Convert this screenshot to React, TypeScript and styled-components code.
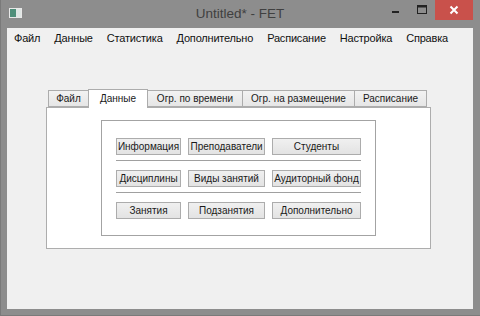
import React from 'react'
import styled, { createGlobalStyle } from 'styled-components'

const GlobalStyle = createGlobalStyle`
  html, body {
    margin: 0;
    padding: 0;
    background: #8d8d8d;
    overflow: hidden;
  }
  * {
    box-sizing: border-box;
  }
`

const Frame = styled.div`
  width: 480px;
  height: 316px;
  display: flex;
  flex-direction: column;
  padding: 0 7px 6px 6px;
  background: #8d8d8d;
  border-left: 1px solid #7a7a7a;
  border-bottom: 1px solid #7a7a7a;
  font-family: "Liberation Sans", Arial, sans-serif;
`

const TitleBar = styled.div`
  height: 28px;
  display: grid;
  grid-template-columns: 1fr auto 1fr;
  align-items: start;
`

const AppIcon = styled.div`
  margin: 8px 0 0 2px;
  width: 13px;
  height: 10px;
  border: 1px solid #e8e8e8;
  background: linear-gradient(90deg, #4f8f7a 0 55%, #dfe6e4 55%);
`

const Title = styled.div`
  padding-top: 5px;
  font-size: 13.5px;
  color: #404040;
  line-height: 18px;
`

const Controls = styled.div`
  display: flex;
  justify-content: flex-end;
  align-items: flex-start;
`

const ControlButton = styled.div<{ $close?: boolean }>`
  width: ${({ $close }) => ($close ? '38px' : '26px')};
  height: 20px;
  display: flex;
  align-items: center;
  justify-content: center;
  background: ${({ $close }) => ($close ? '#c9514b' : 'transparent')};
`

const Client = styled.div`
  flex: 1;
  background: #f0f0f0;
  display: flex;
  flex-direction: column;
`

const MenuBar = styled.div`
  display: flex;
  height: 17px;
  align-items: center;
  margin-top: 1px;
`

const MenuItem = styled.div`
  padding: 0 7px;
  font-size: 11px;
  letter-spacing: -0.2px;
  color: #111;
`

const TabWidget = styled.div`
  margin: 43px 42px 0 39px;
  display: flex;
  flex-direction: column;
`

const TabBar = styled.div`
  display: flex;
  align-items: flex-end;
  padding-left: 2px;
  height: 18px;
  position: relative;
  z-index: 1;
`

const Tab = styled.div<{ $width: number; $active?: boolean }>`
  width: ${({ $width }) => $width}px;
  height: ${({ $active }) => ($active ? '19px' : '17px')};
  margin-bottom: ${({ $active }) => ($active ? '-1px' : '0')};
  border: 1px solid #acacac;
  border-bottom: ${({ $active }) => ($active ? 'none' : '1px solid #acacac')};
  margin-left: -1px;
  background: ${({ $active }) => ($active ? '#ffffff' : 'linear-gradient(#f2f2f2, #e6e6e6)')};
  font-size: 10px;
  color: #1a1a1a;
  display: flex;
  align-items: center;
  justify-content: center;
  padding-bottom: ${({ $active }) => ($active ? '2px' : '0')};
  &:first-child {
    margin-left: 0;
  }
`

const Panel = styled.div`
  height: 142px;
  background: #ffffff;
  border: 1px solid #adadad;
  display: flex;
  justify-content: center;
  padding-top: 12px;
`

const GroupBox = styled.div`
  width: 275px;
  height: 116px;
  border: 1px solid #a3a3a3;
  padding: 17px 14px 0;
`

const ButtonRow = styled.div`
  display: grid;
  grid-template-columns: 65px 77px 89px;
  column-gap: 7px;
`

const Separator = styled.div`
  height: 2px;
  border-top: 1px solid #a0a0a0;
  border-bottom: 1px solid #ffffff;
  margin: 5px 0 8px;
`

const PushButton = styled.div`
  height: 17px;
  border: 1px solid #acacac;
  background: linear-gradient(#f0f0f0, #e3e3e3);
  font-size: 10px;
  color: #1a1a1a;
  display: flex;
  align-items: center;
  justify-content: center;
  white-space: nowrap;
`

const menu = ['Файл', 'Данные', 'Статистика', 'Дополнительно', 'Расписание', 'Настройка', 'Справка']

const tabs = [
  { label: 'Файл', width: 41 },
  { label: 'Данные', width: 60, active: true },
  { label: 'Огр. по времени', width: 96 },
  { label: 'Огр. на размещение', width: 113 },
  { label: 'Расписание', width: 73 },
]

const rows = [
  ['Информация', 'Преподаватели', 'Студенты'],
  ['Дисциплины', 'Виды занятий', 'Аудиторный фонд'],
  ['Занятия', 'Подзанятия', 'Дополнительно'],
]

const App = () => (
  <>
    <GlobalStyle />
    <Frame>
      <TitleBar>
        <AppIcon />
        <Title>Untitled* - FET</Title>
        <Controls>
          <ControlButton>
            <svg width="10" height="10" viewBox="0 0 10 10">
              <rect x="1" y="6" width="7" height="2" fill="#222" />
            </svg>
          </ControlButton>
          <ControlButton>
            <svg width="10" height="10" viewBox="0 0 10 10">
              <rect x="0.5" y="0.5" width="9" height="8" fill="none" stroke="#222" />
              <rect x="0.5" y="0.5" width="9" height="2" fill="#222" />
            </svg>
          </ControlButton>
          <ControlButton $close>
            <svg width="10" height="10" viewBox="0 0 10 10">
              <path d="M1.5 1.5 L8.5 8.5 M8.5 1.5 L1.5 8.5" stroke="#fff" strokeWidth="2" />
            </svg>
          </ControlButton>
        </Controls>
      </TitleBar>
      <Client>
        <MenuBar>
          {menu.map((m) => (
            <MenuItem key={m}>{m}</MenuItem>
          ))}
        </MenuBar>
        <TabWidget>
          <TabBar>
            {tabs.map((t) => (
              <Tab key={t.label} $width={t.width} $active={t.active}>
                {t.label}
              </Tab>
            ))}
          </TabBar>
          <Panel>
            <GroupBox>
              {rows.map((row, i) => (
                <React.Fragment key={i}>
                  {i > 0 && <Separator />}
                  <ButtonRow>
                    {row.map((b) => (
                      <PushButton key={b}>{b}</PushButton>
                    ))}
                  </ButtonRow>
                </React.Fragment>
              ))}
            </GroupBox>
          </Panel>
        </TabWidget>
      </Client>
    </Frame>
  </>
)

export default App
